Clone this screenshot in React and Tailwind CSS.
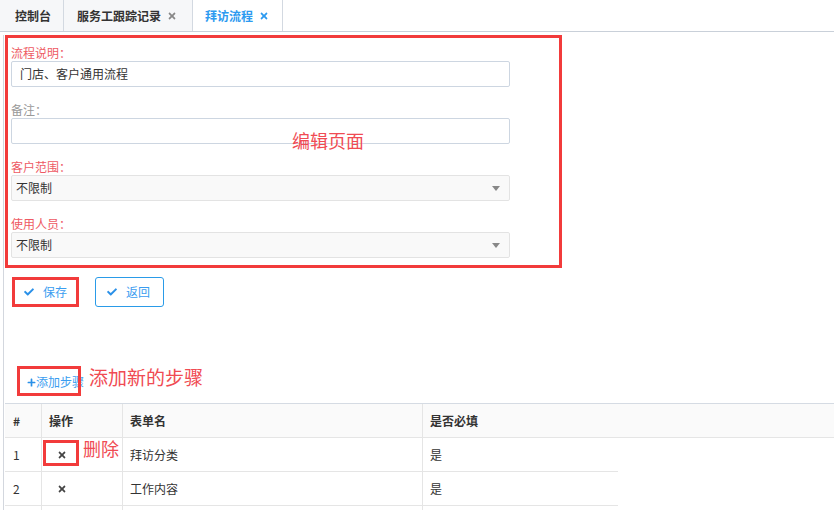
import React from "react";
import { FaCheck, FaTimes, FaPlus } from "react-icons/fa";

// 拜访流程 edit page — tabs, form, step table, red annotations

const font = { fontFamily: '"Noto Sans CJK SC", "Noto Sans", sans-serif' };

function Tab({ label, closable, active, className }) {
  return (
    <div
      className={
        "flex h-full shrink-0 items-center gap-[6px] border-r border-[#d3d9e1] text-[12px] font-bold " +
        (active ? "bg-white text-[#2c9af0] -mb-px h-[32px] " : "bg-[#f6f7f9] text-[#333] ") +
        className
      }
    >
      <span>{label}</span>
      {closable && (
        <FaTimes className={"text-[10px] " + (active ? "text-[#2c9af0]" : "text-[#888]")} />
      )}
    </div>
  );
}

function Field({ label, required, children, first }) {
  return (
    <div className={first ? "" : "mt-[15px]"}>
      <div className={"h-[16px] text-[12px] leading-[16px] " + (required ? "text-[#ee5a63]" : "text-[#999]")}>
        {label}：
      </div>
      {children}
    </div>
  );
}

function Select({ value }) {
  return (
    <div className="flex h-[26px] w-[499px] items-center justify-between rounded-[2px] border border-[#e3e3e3] bg-[#f9f9f9] pl-[4px] pr-[9px] text-[12px] text-[#333]">
      <span>{value}</span>
      <span className="h-0 w-0 border-x-[4px] border-t-[5px] border-x-transparent border-t-[#888]" />
    </div>
  );
}

const steps = [
  { id: 1, name: "拜访分类", required: "是" },
  { id: 2, name: "工作内容", required: "是" },
  { id: 3, name: "", required: "" },
];

export default function App() {
  return (
    <div className="relative h-[510px] w-[834px] overflow-hidden bg-white" style={font}>
      {/* ---------- tab bar ---------- */}
      <div className="flex h-[32px] border-b border-[#c9d0d9] bg-white">
        <Tab label="控制台" className="w-[64px] pl-[15px]" />
        <Tab label="服务工跟踪记录" closable className="w-[129px] pl-[13px]" />
        <Tab label="拜访流程" closable active className="w-[90px] pl-[12px]" />
      </div>

      {/* ---------- page ---------- */}
      <div className="ml-[3px] h-[478px] border-l border-[#d3d7de]">
        {/* form (red annotation box) */}
        <div className="ml-[1px] mt-[3px] h-[233px] w-[557px] border-[3px] border-[#f23b3b] pl-[3px] pt-[7px]">
          <Field label="流程说明" required first>
            <div className="flex h-[26px] w-[499px] items-center rounded-[2px] border border-[#cdd6e1] pl-[8px] text-[12px] text-[#333]">
              门店、客户通用流程
            </div>
          </Field>
          <Field label="备注">
            <div className="h-[26px] w-[499px] rounded-[2px] border border-[#cdd6e1]" />
          </Field>
          <Field label="客户范围" required>
            <Select value="不限制" />
          </Field>
          <Field label="使用人员" required>
            <Select value="不限制" />
          </Field>
        </div>

        {/* buttons */}
        <div className="ml-[8px] mt-[9px] flex gap-[16px]">
          <button className="flex h-[30px] w-[67px] items-center gap-[9px] border-[3px] border-[#f23b3b] pl-[9px] text-[12px] text-[#3a9df0]">
            <FaCheck className="text-[10px] text-[#2a90e8]" />
            保存
          </button>
          <button className="flex h-[30px] w-[69px] items-center gap-[9px] rounded-[3px] border border-[#2a9be8] pl-[11px] text-[12px] text-[#3a9df0]">
            <FaCheck className="text-[10px] text-[#2a90e8]" />
            返回
          </button>
        </div>

        {/* add step link */}
        <div className="relative ml-[23px] mt-[66px] flex h-[18px] items-center text-[12px] text-[#3a9df0]">
          <FaPlus className="text-[9px] text-[#2a90e8]" />
          <span>添加步骤</span>
        </div>

        {/* steps table */}
        <div className="ml-[1px] mt-[12px] text-[12px] text-[#333]">
          <div className="flex h-[35px] items-center border-y border-y-[#d5dbe3] border-b-[#e5e5e5] bg-[#fafafa] font-bold">
            <div className="flex h-full w-[37px] items-center border-r border-[#e5e5e5] pl-[8px]">#</div>
            <div className="flex h-full w-[81px] items-center border-r border-[#e5e5e5] pl-[7px]">操作</div>
            <div className="flex h-full w-[300px] items-center border-r border-[#e5e5e5] pl-[7px]">表单名</div>
            <div className="flex h-full flex-1 items-center pl-[7px]">是否必填</div>
          </div>
          {steps.map((s) => (
            <div key={s.id} className="flex h-[34px] w-[613px] items-center border-b border-[#e5e5e5]">
              <div className="flex h-full w-[37px] items-center border-r border-[#e5e5e5] pl-[8px]">
                {s.name ? s.id : ""}
              </div>
              <div className="flex h-full w-[81px] items-center border-r border-[#e5e5e5] pl-[15px]">
                {s.name && <FaTimes className="text-[10px] text-[#444]" />}
              </div>
              <div className="flex h-full w-[300px] items-center border-r border-[#e5e5e5] pl-[7px]">{s.name}</div>
              <div className="flex h-full flex-1 items-center pl-[7px]">{s.required}</div>
            </div>
          ))}
        </div>
      </div>

      {/* ---------- red annotations ---------- */}
      <div className="absolute left-[292px] top-[128px] text-[18px] leading-[24px] text-[#f04b53]">编辑页面</div>
      <div className="absolute left-[17px] top-[366px] h-[30px] w-[64px] border-[3px] border-[#f23b3b]" />
      <div className="absolute left-[89px] top-[365px] text-[19px] leading-[24px] text-[#f04b53]">添加新的步骤</div>
      <div className="absolute left-[43px] top-[440px] h-[26px] w-[36px] border-[3px] border-[#f23b3b]" />
      <div className="absolute left-[83px] top-[436px] text-[18px] leading-[24px] text-[#f04b53]">删除</div>
    </div>
  );
}
